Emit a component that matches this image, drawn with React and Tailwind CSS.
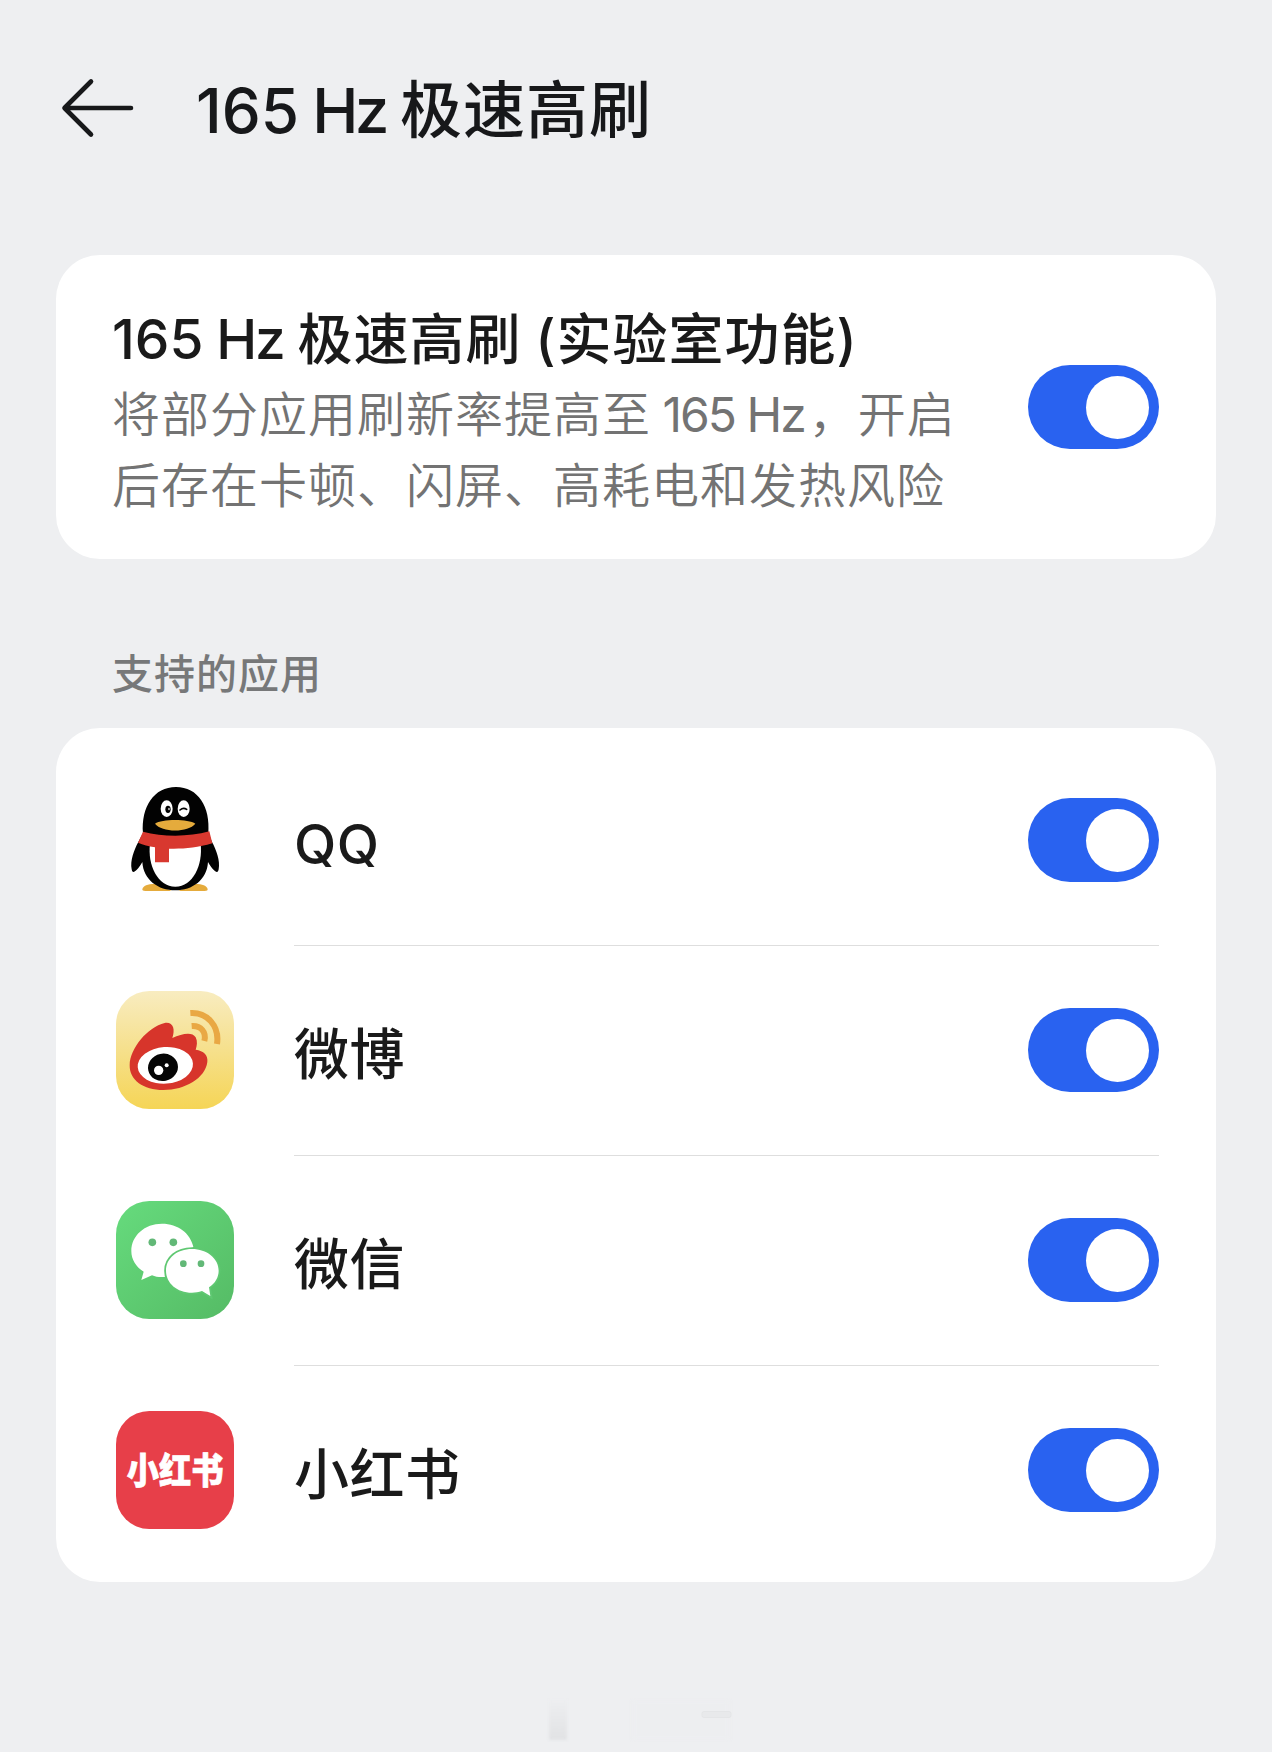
import React, { useState } from "react";

function BackArrow() {
  return (
    <svg
      viewBox="0 0 74 62"
      className="h-[62px] w-[74px]"
      fill="none"
      stroke="#17181a"
      strokeWidth="4.6"
      strokeLinecap="round"
      strokeLinejoin="round"
    >
      <path d="M31 4.5 L4.5 31 L31 57.5 M5 31 H71" />
    </svg>
  );
}

function QQIcon() {
  return (
    <svg viewBox="18 33 354 354" className="h-[118px] w-[118px]">
      <path d="M97 358 C99 346 116 341 140 342 L185 363 H106 C99 363 97 361 97 358 Z" fill="#e5ab3c" />
      <path d="M293 358 C291 346 274 341 250 342 L205 363 H284 C291 363 293 361 293 358 Z" fill="#e5ab3c" />
      <path
        d="M85 216 C72 240 60 272 65 298 C67 312 78 308 97 276 C100 330 145 361 196 361 C247 361 291 330 294 276 C313 308 324 312 326 298 C331 272 319 240 306 216 L295 190 C302 110 264 51 198 51 C132 51 93 110 99 190 Z"
        fill="#020202"
      />
      <path
        d="M120 222 C112 285 143 350 196 350 C249 350 279 285 272 222 Z"
        fill="#fff"
      />
      <ellipse cx="170" cy="116" rx="18" ry="25" fill="#fff" />
      <ellipse cx="221" cy="116" rx="18" ry="25" fill="#fff" />
      <ellipse cx="174" cy="118" rx="8" ry="11" fill="#020202" />
      <ellipse cx="177" cy="117" rx="2" ry="4" fill="#fff" />
      <path
        d="M210 120 Q220 111 230 118"
        fill="none"
        stroke="#020202"
        strokeWidth="5"
        strokeLinecap="round"
      />
      <path
        d="M135 161 C155 146 235 146 256 161 C235 188 155 188 135 161 Z"
        fill="#e5ab3c"
      />
      <path
        d="M99 185 C160 201 235 201 298 184 L307 220 C260 234 220 237 177 236 V277 H135 V232 C115 228 100 225 84 218 Z"
        fill="#d8382f"
      />
    </svg>
  );
}

function WeiboIcon() {
  return (
    <svg viewBox="30 33 354 354" className="h-[118px] w-[118px]">
      <defs>
        <linearGradient id="weibo-bg" x1="0" y1="0" x2="0" y2="1">
          <stop offset="0" stopColor="#f8ecc0" />
          <stop offset="0.5" stopColor="#f6e08c" />
          <stop offset="1" stopColor="#f5d556" />
        </linearGradient>
      </defs>
      <rect x="30" y="33" width="354" height="354" rx="100" fill="url(#weibo-bg)" />
      <path
        d="M71 255 C72 205 125 141 176 129 C202 125 208 148 199 174 C228 161 258 154 269 172 C275 184 273 197 269 209 C293 212 307 226 304 246 C298 294 238 330 172 330 C112 330 70 300 71 255 Z"
        fill="#d7352b"
      />
      <ellipse cx="178" cy="256" rx="83" ry="55" transform="rotate(-4 178 256)" fill="#fff" />
      <ellipse cx="171" cy="262" rx="45" ry="41" transform="rotate(-12 171 262)" fill="#050505" />
      <circle cx="158" cy="271" r="14" fill="#fff" />
      <circle cx="182" cy="256" r="6" fill="#fff" />
      <g fill="none" stroke="#e9a844" strokeWidth="18" strokeLinecap="butt">
        <path d="M253 99 C303 96 341 138 333 192" />
        <path d="M257 138 C284 136 302 156 295 183" />
      </g>
    </svg>
  );
}

function WeChatIcon() {
  return (
    <svg viewBox="30 33 354 354" className="h-[118px] w-[118px]">
      <defs>
        <linearGradient id="wechat-bg" x1="0" y1="0" x2="1" y2="1">
          <stop offset="0" stopColor="#66db7d" />
          <stop offset="1" stopColor="#55bb65" />
        </linearGradient>
      </defs>
      <rect x="30" y="33" width="354" height="354" rx="100" fill="url(#wechat-bg)" />
      <path
        d="M168 101 C116 101 76 137 76 183 C76 209 90 231 113 245 L106 270 L138 256 C149 261 162 262 176 261 L262 170 C253 130 216 101 168 101 Z"
        fill="#fff"
      />
      <path
        d="M258 177 C302 177 338 205 338 242 C338 262 327 280 309 292 L313 318 L288 303 C278 307 268 308 258 308 C213 308 180 279 180 242 C180 205 213 177 258 177 Z"
        fill="#fff"
        stroke="#5fc872"
        strokeWidth="11"
        paintOrder="stroke"
      />
      <g fill="#62b877">
        <circle cx="139" cy="157" r="11.5" />
        <circle cx="202" cy="157" r="11.5" />
        <circle cx="232" cy="221" r="10" />
        <circle cx="285" cy="221" r="10" />
      </g>
    </svg>
  );
}

function RedNoteIcon() {
  return (
    <svg viewBox="30 33 354 354" className="h-[118px] w-[118px]">
      <rect x="30" y="33" width="354" height="354" rx="100" fill="#e73f49" />
      <text
        transform="translate(62 251) scale(0.88 1)"
        className="font-['Noto_Sans_CJK_SC',sans-serif] text-[110px] font-black"
        fill="#fff"
        stroke="#fff"
        strokeWidth="2"
      >
        小红书
      </text>
    </svg>
  );
}

const apps = [
  { name: "QQ", icon: <QQIcon /> },
  { name: "微博", icon: <WeiboIcon /> },
  { name: "微信", icon: <WeChatIcon /> },
  { name: "小红书", icon: <RedNoteIcon /> },
];

function Toggle({ label }) {
  const [on, setOn] = useState(true);

  return (
    <button
      role="switch"
      aria-checked={on}
      aria-label={label}
      onClick={() => setOn(!on)}
      className={`flex h-[84px] w-[131px] shrink-0 items-center rounded-full px-2.5 ${
        on ? "justify-end bg-[#2962f0]" : "justify-start bg-gray-300"
      }`}
    >
      <span className="size-[63px] rounded-full bg-white" />
    </button>
  );
}

function AppRow({ app, last }) {
  return (
    <li className="flex h-[210px] items-center pl-[60px]">
      {app.icon}
      <div
        className={`ml-[60px] mr-[57px] flex h-full flex-1 items-center justify-between ${
          last ? "" : "shadow-[0_1px_0_#dedede]"
        }`}
      >
        <span className="pt-[9px] text-[55px] font-medium leading-none tracking-[0.5px] text-[#1a1a1a]">
          {app.name}
        </span>
        <Toggle label={app.name} />
      </div>
    </li>
  );
}

function App() {
  return (
    <div className="flex h-[1752px] w-[1272px] flex-col bg-[#eeeff1] px-14 font-[Inter,'Noto_Sans_CJK_SC',sans-serif]">
      <header className="mt-[68px] flex h-20 items-center pl-1">
        <BackArrow />
        <h1 className="ml-[62px] whitespace-nowrap pt-[6px] text-[62px] font-medium leading-none text-[#17181a]">
          165
          <span className="tracking-[-3.5px]"> Hz </span>
          <span className="ml-px tracking-[1px]">极速高刷</span>
        </h1>
      </header>

      <section className="mt-[107px] flex h-[304px] items-center justify-between rounded-[44px] bg-white pl-14 pr-[57px]">
        <div className="whitespace-nowrap pt-[7px]">
          <h2 className="text-[55px] font-medium leading-[79px] text-[#1a1a1a]">
            165
            <span className="tracking-[-2px]"> Hz </span>
            <span className="ml-px tracking-[1px]">极速高刷</span>
            <span className="tracking-[-1px]"> </span>
            <span className="tracking-[1px]">(实验室功能)</span>
          </h2>
          <p className="text-[48px] font-[350] leading-[71px] tracking-[1px] text-[#737373]">
            将部分应用刷新率提高至
            <span className="font-normal tracking-[-2px]"> 165 Hz</span>
            <span className="ml-1">，开启</span>
            <br />
            后存在卡顿、闪屏、高耗电和发热风险
          </p>
        </div>
        <Toggle label="165 Hz 极速高刷" />
      </section>

      <h3 className="mt-[85px] h-[84px] pl-14 text-[41px] font-medium leading-[60px] tracking-[1px] text-[#777879]">
        支持的应用
      </h3>

      <ul className="rounded-[44px] bg-white py-[7px]">
        {apps.map((app, i) => (
          <AppRow key={app.name} app={app} last={i === apps.length - 1} />
        ))}
      </ul>

      <svg viewBox="0 0 190 44" className="ml-[490px] mt-[116px] h-11 w-[190px]">
        <defs>
          <linearGradient id="smudge" x1="0" y1="0" x2="0" y2="1">
            <stop offset="0" stopColor="#edeef0" />
            <stop offset="1" stopColor="#e1e2e4" />
          </linearGradient>
        </defs>
        <rect x="3" y="2" width="18" height="40" fill="url(#smudge)" className="blur-[1.5px]" />
        <rect x="87" y="2" width="96" height="40" fill="#edeef0" className="blur-[2px]" />
        <rect x="156" y="13.5" width="29" height="6" rx="2" fill="#e8e9eb" stroke="#e4e5e7" />
      </svg>
    </div>
  );
}

export default App;
